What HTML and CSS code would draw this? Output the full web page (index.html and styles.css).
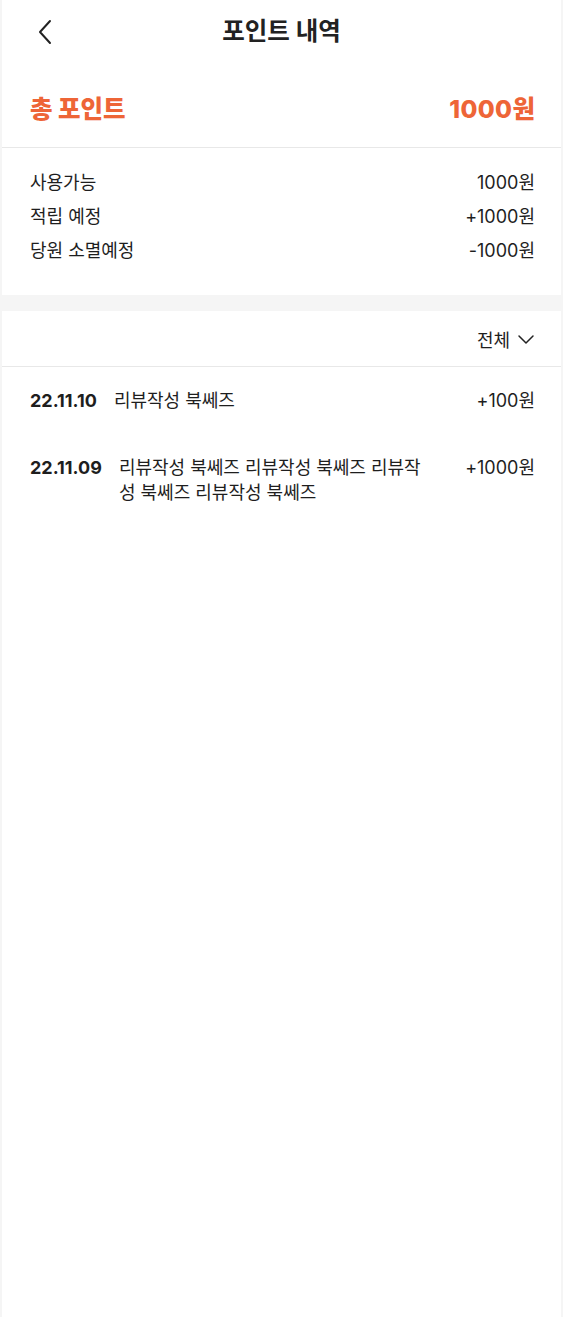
FILE: index.html
```html
<!DOCTYPE html>
<html lang="ko">
<head>
<meta charset="utf-8">
<title>포인트 내역</title>
<link rel="stylesheet" href="styles.css">
</head>
<body>
<div class="page">
  <header class="topbar">
    <button class="back" aria-label="뒤로">
      <svg width="16" height="26" viewBox="0 0 16 26"><path d="M14 2 L4 13 L14 24" fill="none" stroke="#222" stroke-width="2" stroke-linecap="round" stroke-linejoin="round"/></svg>
    </button>
    <h1 class="title">포인트 내역</h1>
  </header>

  <section class="total">
    <span>총 포인트</span>
    <span class="total-value">1000원</span>
  </section>

  <section class="details">
    <div class="row"><span>사용가능</span><span>1000원</span></div>
    <div class="row"><span>적립 예정</span><span>+1000원</span></div>
    <div class="row"><span>당원 소멸예정</span><span>-1000원</span></div>
  </section>

  <div class="spacer"></div>

  <div class="filter">
    <button class="filter-btn">전체
      <svg width="18" height="12" viewBox="0 0 18 12"><path d="M2 3 L9 10 L16 3" fill="none" stroke="#222" stroke-width="1.5" stroke-linecap="round" stroke-linejoin="round"/></svg>
    </button>
  </div>

  <ul class="history">
    <li class="item">
      <span class="date">22.11.10</span>
      <span class="desc">리뷰작성 북쎄즈</span>
      <span class="amount">+100원</span>
    </li>
    <li class="item">
      <span class="date">22.11.09</span>
      <span class="desc">리뷰작성 북쎄즈 리뷰작성 북쎄즈 리뷰작성 북쎄즈 리뷰작성 북쎄즈</span>
      <span class="amount">+1000원</span>
    </li>
  </ul>
</div>
</body>
</html>
```

FILE: styles.css
```css
* { box-sizing: border-box; }
html, body { margin: 0; padding: 0; }
body {
  background: #f5f5f5;
  font-family: Inter, "Noto Sans CJK KR", sans-serif;
  color: #222;
}
.page {
  margin: 0 2px;
  min-height: 1317px;
  background: #fff;
}
.topbar {
  position: relative;
  height: 64px;
  padding-bottom: 3px;
  display: flex;
  align-items: center;
  justify-content: center;
}
.back {
  position: absolute;
  left: 34px;
  top: 19px;
  padding: 0;
  border: 0;
  background: none;
  display: flex;
}
.title {
  margin: 0;
  font-size: 24.5px;
  font-weight: 700;
  line-height: 30px;
}
.total {
  display: flex;
  justify-content: space-between;
  align-items: center;
  padding: 31px 26px 24px 28px;
  font-size: 24.5px;
  font-weight: 800;
  color: #ee6537;
  line-height: 28px;
  border-bottom: 1px solid #e8e8e8;
}
.total-value {
  letter-spacing: 0.4px;
  margin-right: -0.4px;
}
.details {
  padding: 18px 26px 27px 28px;
  color: #1e1e1e;
}
.row {
  display: flex;
  justify-content: space-between;
  font-size: 18px;
  line-height: 34px;
}
.spacer {
  height: 16px;
  background: #f5f5f5;
}
.filter {
  height: 56px;
  display: flex;
  justify-content: flex-end;
  align-items: center;
  padding: 0 26px 0 28px;
  border-bottom: 1px solid #e8e8e8;
}
.filter-btn {
  display: flex;
  align-items: center;
  gap: 7px;
  padding: 0;
  border: 0;
  background: none;
  font: inherit;
  font-size: 18px;
  color: #1e1e1e;
}
.history {
  list-style: none;
  margin: 0;
  padding: 0;
}
.item {
  display: flex;
  align-items: flex-start;
  padding: 21px 26px 21px 28px;
  font-size: 18px;
  line-height: 25px;
  color: #1e1e1e;
}
.date {
  font-weight: 700;
  margin-right: 17px;
  flex: none;
}
.desc {
  flex: 1;
  margin-right: 28px;
}
.amount {
  flex: none;
}
```
